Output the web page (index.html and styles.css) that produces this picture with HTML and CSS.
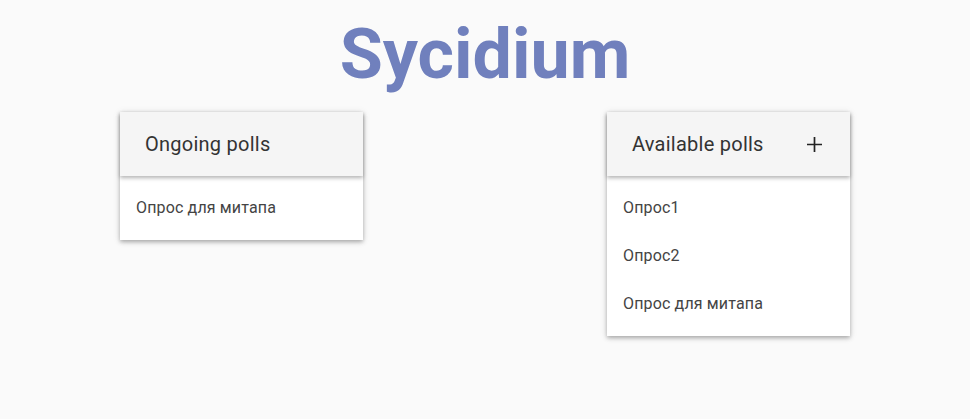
FILE: index.html
```html
<!DOCTYPE html>
<html>
<head>
<meta charset="utf-8">
<link rel="stylesheet" href="styles.css">
</head>
<body>
<h1 class="title">Sycidium</h1>
<main class="cards">
  <section class="card">
    <header class="card-head">
      <span class="card-title">Ongoing polls</span>
    </header>
    <ul class="list">
      <li class="item">Опрос для митапа</li>
    </ul>
  </section>
  <section class="card">
    <header class="card-head">
      <span class="card-title">Available polls</span>
      <svg class="plus" width="15" height="15" viewBox="0 0 15 15"><path d="M7.5 0V15M0 7.5H15" stroke="#222" stroke-width="1.7"/></svg>
    </header>
    <ul class="list">
      <li class="item">Опрос1</li>
      <li class="item">Опрос2</li>
      <li class="item">Опрос для митапа</li>
    </ul>
  </section>
</main>
</body>
</html>
```
FILE: styles.css
```css
html, body { margin: 0; padding: 0; }
body {
  background: #fafafa;
  font-family: Roboto, "Noto Sans", sans-serif;
  height: 419px;
  overflow: hidden;
}
.title {
  margin: 19px 0 0;
  font-size: 70px;
  line-height: 70px;
  font-weight: 700;
  color: #7080bd;
  text-align: center;
}
.cards {
  display: flex;
  justify-content: space-between;
  align-items: flex-start;
  padding: 0 120px;
  margin-top: 23px;
}
.card {
  width: 243px;
  background: #fff;
  box-shadow: 0 2px 4px rgba(0,0,0,.28), 0 1px 8px rgba(0,0,0,.1);
}
.card-head {
  height: 64px;
  box-sizing: border-box;
  background: #f5f5f5;
  display: flex;
  align-items: center;
  justify-content: space-between;
  padding: 0 28px 0 25px;
  box-shadow: 0 2px 4px rgba(0,0,0,.3);
  position: relative;
}
.card-title {
  font-size: 20px;
  color: #333;
  letter-spacing: 0.25px;
}
.list {
  list-style: none;
  margin: 0;
  padding: 8px 0;
}
.item {
  height: 48px;
  box-sizing: border-box;
  display: flex;
  align-items: center;
  padding: 0 16px 2px;
  font-size: 16px;
  color: #444;
  letter-spacing: 0.15px;
}
```
